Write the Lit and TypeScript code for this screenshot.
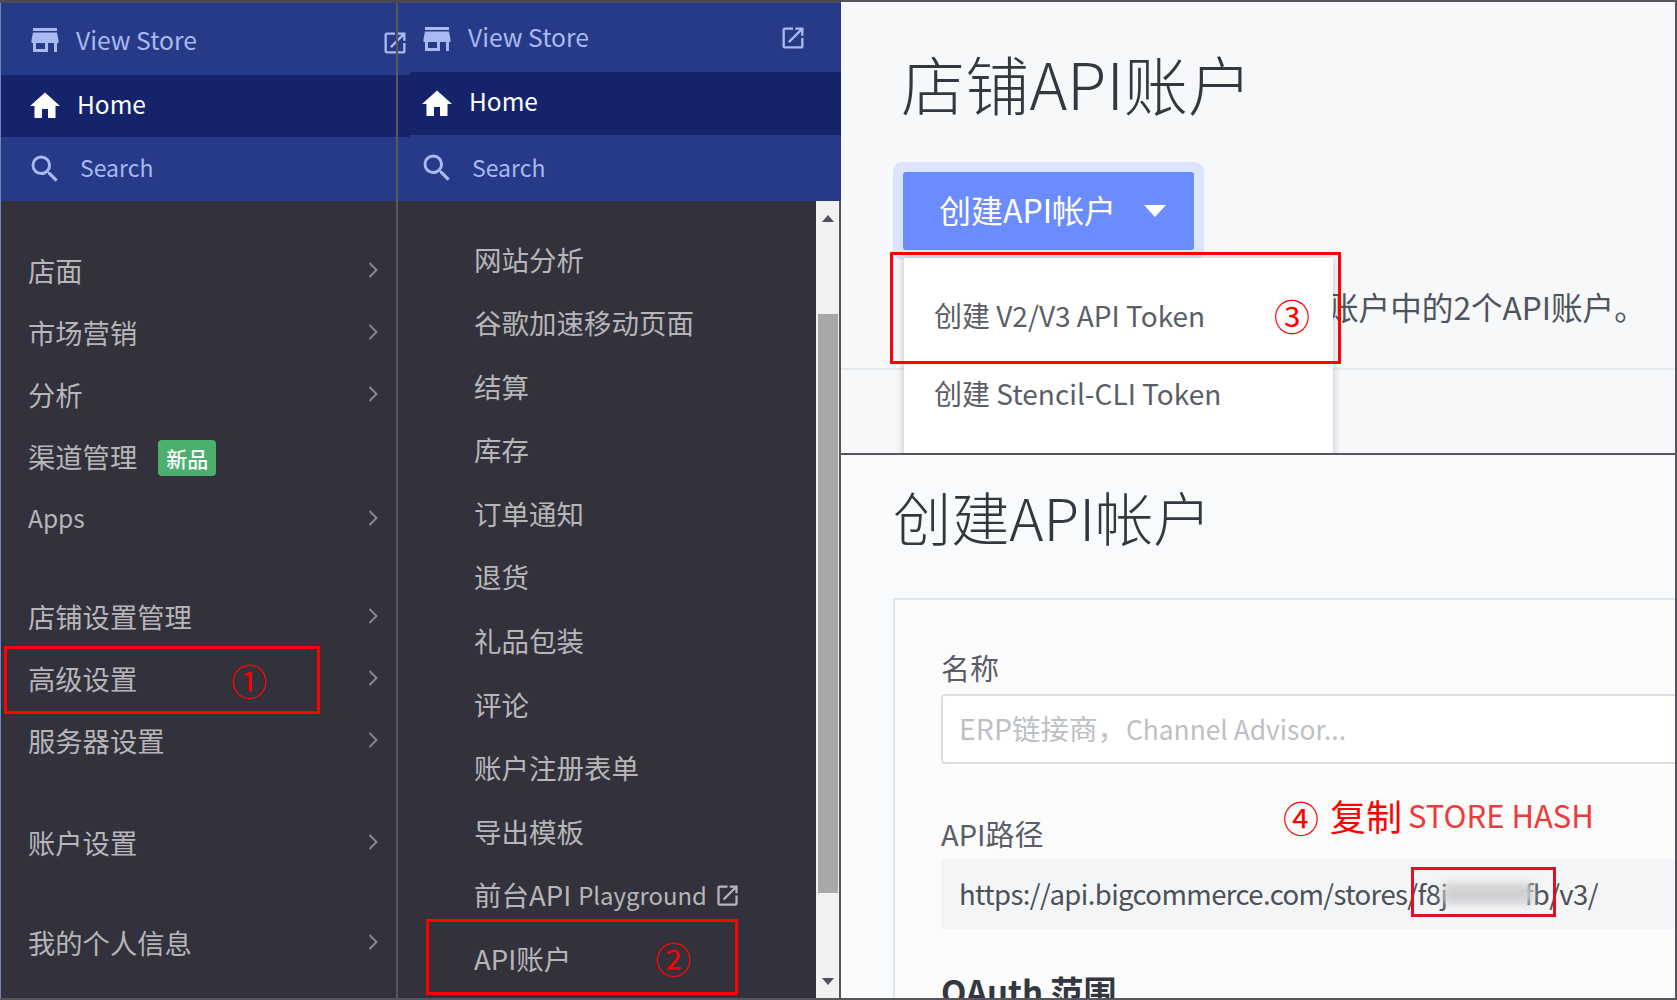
import { LitElement, html, css, svg } from "lit";
import { customElement } from "lit/decorators.js";

const STORE = svg`<path d="M20 4H4v2h16V4zm1 10v-2l-1-5H4l-1 5v2h1v6h10v-6h4v6h2v-6h1zm-9 4H6v-4h6v4z"/>`;
const HOME = svg`<path d="M10 20v-6h4v6h5v-8h3L12 3 2 12h3v8z"/>`;
const SEARCH = svg`<path d="M15.5 14h-.79l-.28-.27A6.471 6.471 0 0 0 16 9.5 6.5 6.5 0 1 0 9.5 16c1.61 0 3.09-.59 4.23-1.57l.27.28v.79l5 4.99L20.49 19l-4.99-5zm-6 0C7.01 14 5 11.99 5 9.5S7.01 5 9.5 5 14 7.01 14 9.5 11.99 14 9.5 14z"/>`;
const EXT = svg`<path d="M19 19H5V5h7V3H5a2 2 0 0 0-2 2v14a2 2 0 0 0 2 2h14c1.1 0 2-.9 2-2v-7h-2v7zM14 3v2h3.59l-9.83 9.83 1.41 1.41L19 6.41V10h2V3h-7z"/>`;

const icon = (p: unknown, cls: string) =>
  html`<svg class=${cls} viewBox="0 0 24 24" fill="currentColor">${p}</svg>`;

const MENU = [
  { t: "店面", c: "" },
  { t: "市场营销", c: "" },
  { t: "分析", c: "" },
  { t: "渠道管理", c: "", badge: "新品", noArrow: true },
  { t: "Apps", c: "latin" },
  { t: "店铺设置管理", c: "g36" },
  { t: "高级设置", c: "" },
  { t: "服务器设置", c: "" },
  { t: "账户设置", c: "g40" },
  { t: "我的个人信息", c: "g38" },
];

const SUB = ["网站分析", "谷歌加速移动页面", "结算", "库存", "订单通知", "退货", "礼品包装", "评论", "账户注册表单", "导出模板"];

@customElement("app-root")
export class AppRoot extends LitElement {
  static styles = css`
    :host {
      display: block;
      width: 1677px;
      height: 1000px;
      overflow: hidden;
      font-family: "Noto Sans CJK SC", "Noto Sans", sans-serif;
      background: #fff;
    }
    .page {
      display: grid;
      grid-template-columns: 410px 431px 836px;
      height: 1000px;
      position: relative;
    }
    .nav {
      display: flex;
      flex-direction: column;
      background: #33313b;
      border-top: 3px solid #4a4a58;
      border-bottom: 2px solid #55555c;
      box-sizing: border-box;
      height: 1000px;
      position: relative;
      min-width: 0;
    }
    .nav.first { z-index: 2; }
    .divider {
      position: absolute;
      left: 396px;
      top: 0;
      bottom: 0;
      width: 2px;
      background: #58585c;
      z-index: 3;
    }
    .edge {
      position: absolute;
      left: 0;
      top: 0;
      bottom: 0;
      width: 1px;
      background: #6f86b8;
      z-index: 3;
    }
    .head {
      display: flex;
      align-items: center;
      color: #a9b9f2;
      background: #263a87;
    }
    .first .head { padding-left: 27px; }
    .second .head { padding-left: 9px; }
    .first .h-store { height: 72px; }
    .first .h-home { height: 62px; background: #15246a; color: #fff; }
    .first .h-search { height: 64px; }
    .second .h-store { height: 69px; }
    .second .h-home { height: 63px; background: #15246a; color: #fff; }
    .second .h-search { height: 66px; }
    .head .i { width: 36px; height: 36px; flex: none; }
    .h-store .i { margin-top: 2px; }
    .head .label { margin-left: 13px; font-size: 24.7px; }
    .h-home .label { margin-left: 14px; font-size: 24.5px; margin-bottom: 6px; }
    .h-search .label { margin-left: 17px; font-size: 23px; margin-bottom: 4px; }
    .second .h-store .label { margin-bottom: 4px; }
    .second .h-search .label { margin-bottom: 2px; }
    .head .ext { width: 28px; height: 28px; margin-left: auto; flex: none; }
    .first .ext { margin-right: 1px; margin-top: 8px; }
    .second .ext { margin-right: 34px; margin-top: 0; }
    .list {
      flex: 1;
      padding: 38px 32px 0 28px;
      color: #b6b6ba;
      font-size: 27.3px;
      min-height: 0;
    }
    .row {
      display: flex;
      align-items: center;
      height: 62px;
      line-height: 62px;
    }
    .latin span:first-child { font-size: 24.5px; }
    .g36 { margin-top: 36px; }
    .g40 { margin-top: 40px; }
    .g38 { margin-top: 38px; }
    .chev { margin-left: auto; width: 10px; height: 18px; fill: none; stroke: #88888c; stroke-width: 2; }
    .badge {
      margin: 3px 0 0 21px;
      width: 58px;
      height: 36px;
      line-height: 36px;
      border-radius: 4px;
      background: #4caf6e;
      color: #fff;
      font-size: 21px;
      text-align: center;
      font-weight: 500;
    }
    .body2 { flex: 1; display: flex; min-height: 0; }
    .sub {
      flex: 1;
      padding: 26.5px 0 0 64px;
      color: #b6b6ba;
      font-size: 27.5px;
    }
    .sub .item { height: 63.6px; line-height: 63.6px; display: flex; align-items: center; white-space: nowrap; }
    .sub .pg { font-size: 0.87em; margin-left: 7px; }
    .sub .e { width: 27px; height: 27px; margin-left: 7px; color: #b6b6ba; }
    .bar {
      width: 25px;
      flex: none;
      box-sizing: border-box;
      background: #f1f1f1;
      display: flex;
      flex-direction: column;
      align-items: center;
      border-right: 2px solid #555;
    }
    .tri { width: 12px; height: 7px; fill: #50505a; flex: none; }
    .tri.up { margin-top: 14px; }
    .thumb { width: 20px; height: 579px; background: #a8a8a8; margin-top: 92px; flex: none; }
    .tri.down { margin-top: 85px; }
    .right { display: grid; grid-template-rows: 453px 547px; min-width: 0; }
    .top {
      background: #f7f8fa;
      border-top: 2px solid #55555c;
      box-sizing: border-box;
      border-right: 2px solid #55555c;
      position: relative;
      overflow: hidden;
      color: #33373f;
    }
    h1 {
      margin: 48px 0 0 60px;
      font-size: 64.2px;
      line-height: 64px;
      font-weight: 300;
      white-space: nowrap;
    }
    .btn {
      margin: 58px 0 0 62px;
      width: 291px;
      height: 78px;
      background: #6b8cff;
      border-radius: 3px;
      box-shadow: 0 0 0 10px #dde4fd;
      box-sizing: border-box;
      display: flex;
      align-items: center;
      padding-left: 36px;
      color: #fff;
      font-size: 32px;
    }
    .btn span { margin-bottom: 4px; }
    .btn svg { width: 22px; height: 12px; margin-left: 28px; fill: #fff; }
    .desc {
      margin: 36px 0 0 0;
      padding: 0 0 42px 486px;
      font-size: 31.6px;
      line-height: 40px;
      color: #50545c;
      border-bottom: 2px solid #e6e9f0;
      white-space: nowrap;
    }
    .menu {
      position: absolute;
      left: 63px;
      top: 256px;
      width: 429px;
      height: 210px;
      background: #fff;
      box-shadow: 0 0 8px rgba(60, 64, 80, 0.3);
      color: #5a5e66;
      font-size: 28px;
      z-index: 2;
    }
    .menu div { position: relative; left: 30px; white-space: nowrap; line-height: 40px; }
    .menu .a { top: 37px; }
    .menu .b { top: 75px; }
    .bottom {
      background: #f9fafb;
      border-top: 2px solid #55555c;
      border-bottom: 2px solid #55555c;
      border-right: 2px solid #55555c;
      box-sizing: border-box;
      position: relative;
      overflow: hidden;
      color: #33373f;
    }
    .bottom h1 { margin: 32px 0 0 52px; font-size: 58.2px; line-height: 58px; }
    .card {
      margin: 53px 0 0 52px;
      width: 900px;
      background: #fbfbfc;
      border: 2px solid #e1e5ec;
      padding: 47px 0 0 46px;
      box-sizing: border-box;
      height: 500px;
    }
    .lab { font-size: 29px; line-height: 40px; color: #5a5e66; }
    .input {
      margin-top: 7px;
      height: 70px;
      box-sizing: border-box;
      background: #fff;
      border: 2px solid #dcdfe3;
      border-radius: 4px;
      padding-left: 16px;
      font-size: 28.5px;
      line-height: 64px;
      color: #bcc0c4;
      white-space: nowrap;
    }
    .input span { font-size: 0.925em; }
    .lab.api { margin-top: 49px; }
    .code {
      margin-top: 6px;
      height: 70px;
      box-sizing: border-box;
      background: #f4f5f6;
      border-radius: 4px;
      padding-left: 18px;
      font-size: 27.5px;
      letter-spacing: -0.6px;
      line-height: 68px;
      color: #4c5058;
      white-space: nowrap;
      position: relative;
    }
    .gap { display: inline-block; width: 77px; }
    .blur {
      position: absolute;
      left: 502px;
      top: 24px;
      width: 90px;
      height: 21px;
      background: #cfd0d2;
      filter: blur(4px);
    }
    h2 { margin: 42px 0 0; font-size: 33px; line-height: 40px; font-weight: 700; color: #33373f; }
    .box { position: absolute; border: 3px solid #f00; box-sizing: border-box; z-index: 5; pointer-events: none; }
    .b1 { left: 4px; top: 646px; width: 316px; height: 68px; }
    .b2 { left: 426px; top: 919px; width: 312px; height: 76px; }
    .b3 { left: 890px; top: 252px; width: 451px; height: 112px; }
    .b4 { left: 1411px; top: 867px; width: 145px; height: 50px; border-color: #e01020; }
    .num {
      position: absolute;
      z-index: 6;
      color: #f00;
      font-size: 36px;
      line-height: 40px;
      width: 40px;
      text-align: center;
    }
    .n1 { left: 229px; top: 660px; }
    .n2 { left: 653px; top: 938px; }
    .n3 { left: 1272px; top: 295px; }
    .note {
      position: absolute;
      z-index: 6;
      left: 1281px;
      top: 790px;
      color: #f00;
      font-size: 36px;
      line-height: 50px;
      white-space: nowrap;
      display: flex;
      align-items: center;
    }
    .note .c { margin-right: 9px; width: 40px; text-align: center; position: relative; top: 2px; }
    .note .s { font-size: 31px; margin-left: 6px; color: #ee3a3a; }
  `;

  private chevron() {
    return html`<svg class="chev" viewBox="0 0 10 18"><path d="M1.5 2l7 7-7 7" /></svg>`;
  }

  render() {
    return html`
      <div class="page">
        <section class="nav first">
          <div class="head h-store">${icon(STORE, "i")}<span class="label">View Store</span>${icon(EXT, "ext")}</div>
          <div class="head h-home">${icon(HOME, "i")}<span class="label">Home</span></div>
          <div class="head h-search">${icon(SEARCH, "i")}<span class="label">Search</span></div>
          <div class="list">
            ${MENU.map(
              (m) => html`<div class="row ${m.c}">
                <span>${m.t}</span>
                ${m.badge ? html`<span class="badge">${m.badge}</span>` : ""}
                ${m.noArrow ? "" : this.chevron()}
              </div>`
            )}
          </div>
          <div class="divider"></div>
          <div class="edge"></div>
        </section>

        <section class="nav second">
          <div class="head h-store">${icon(STORE, "i")}<span class="label">View Store</span>${icon(EXT, "ext")}</div>
          <div class="head h-home">${icon(HOME, "i")}<span class="label">Home</span></div>
          <div class="head h-search">${icon(SEARCH, "i")}<span class="label">Search</span></div>
          <div class="body2">
            <div class="sub">
              ${SUB.map((s) => html`<div class="item">${s}</div>`)}
              <div class="item">前台API<span class="pg">Playground</span>${icon(EXT, "e")}</div>
              <div class="item">API账户</div>
            </div>
            <div class="bar">
              <svg class="tri up" viewBox="0 0 12 7"><path d="M6 0l6 7H0z" /></svg>
              <div class="thumb"></div>
              <svg class="tri down" viewBox="0 0 12 7"><path d="M0 0h12L6 7z" /></svg>
            </div>
          </div>
        </section>

        <section class="right">
          <div class="top">
            <h1>店铺API账户</h1>
            <div class="btn"><span>创建API帐户</span><svg viewBox="0 0 22 12"><path d="M0 0h22L11 12z" /></svg></div>
            <p class="desc">账户中的2个API账户。</p>
            <div class="menu">
              <div class="a">创建 V2/V3 API Token</div>
              <div class="b">创建 Stencil-CLI Token</div>
            </div>
          </div>
          <div class="bottom">
            <h1>创建API帐户</h1>
            <div class="card">
              <div class="lab">名称</div>
              <div class="input">ERP链接商，<span>Channel Advisor...</span></div>
              <div class="lab api">API路径</div>
              <div class="code">https://api.bigcommerce.com/stores/f8j<span class="gap"></span>fb/v3/<span class="blur"></span></div>
              <h2>OAuth 范围</h2>
            </div>
          </div>
        </section>

        <div class="box b1"></div>
        <div class="box b2"></div>
        <div class="box b3"></div>
        <div class="box b4"></div>
        <span class="num n1">①</span>
        <span class="num n2">②</span>
        <span class="num n3">③</span>
        <div class="note"><span class="c">④</span>复制<span class="s">STORE HASH</span></div>
      </div>
    `;
  }
}
